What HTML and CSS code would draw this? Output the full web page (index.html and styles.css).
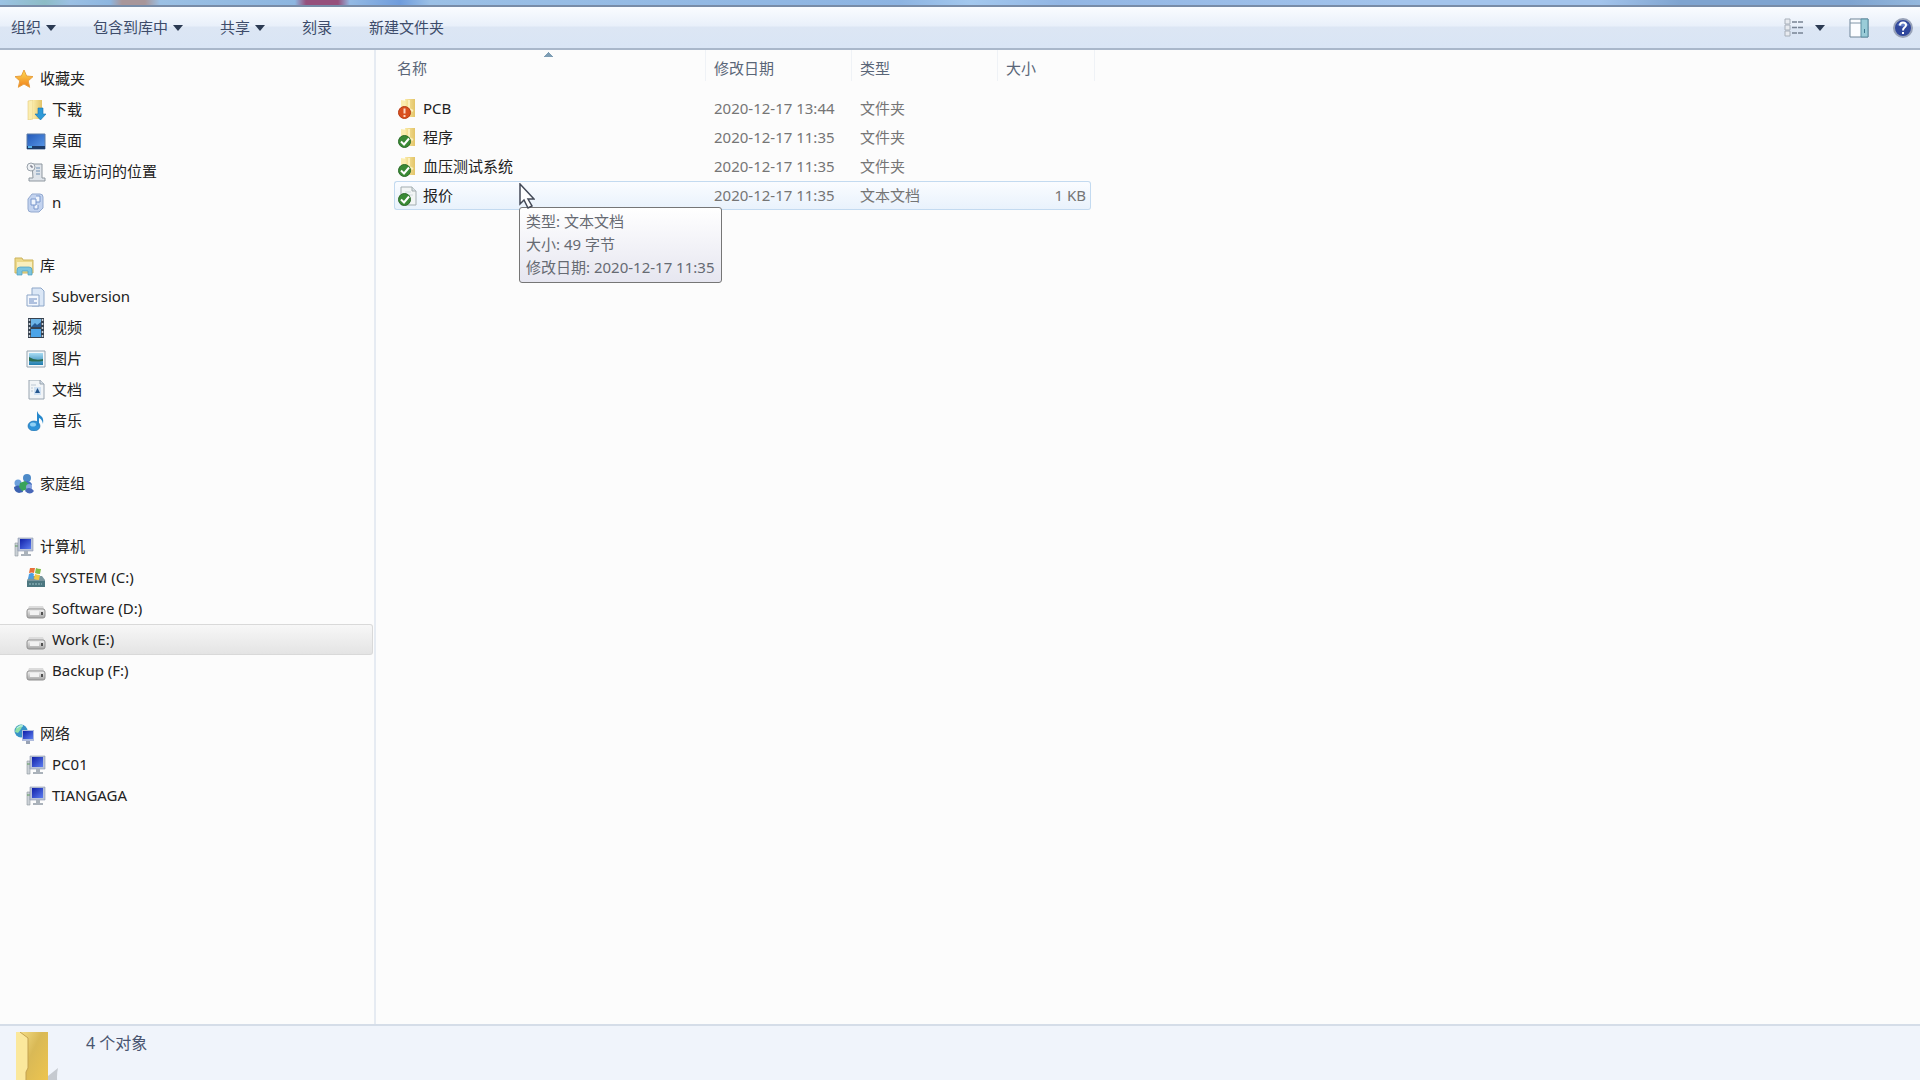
FILE: index.html
```html
<!DOCTYPE html>
<html lang="zh-CN">
<head>
<meta charset="utf-8">
<meta name="viewport" content="width=device-width, initial-scale=1">
<title>Work (E:)</title>
<link rel="stylesheet" href="styles.css">
</head>
<body>
<svg class="defs" aria-hidden="true">
  <defs>
    <linearGradient id="g-folder" x1="0" x2="1"><stop offset="0" stop-color="#faeaa6"/><stop offset="1" stop-color="#e3c468"/></linearGradient>
    <linearGradient id="g-star" y2="1" x2="0"><stop offset="0" stop-color="#ffdf52"/><stop offset="1" stop-color="#f07f1c"/></linearGradient>
    <linearGradient id="g-screen" x2="1" y2="1"><stop offset="0" stop-color="#1020a8"/><stop offset="1" stop-color="#5b7cf0"/></linearGradient>
    <linearGradient id="g-desk" x2="1" y2="1"><stop offset="0" stop-color="#2358b8"/><stop offset="1" stop-color="#5b9bea"/></linearGradient>
    <linearGradient id="g-drive" x2="0" y2="1"><stop offset="0" stop-color="#f4f4f4"/><stop offset="1" stop-color="#a5a5a5"/></linearGradient>
    <linearGradient id="g-sky" x2="0" y2="1"><stop offset="0" stop-color="#a9dcf3"/><stop offset="1" stop-color="#1f7cae"/></linearGradient>
    <linearGradient id="g-big" x1="0" x2="1" y2="1"><stop offset="0" stop-color="#f3dc86"/><stop offset=".4" stop-color="#d9b956"/><stop offset="1" stop-color="#f0c64e"/></linearGradient>
    <symbol id="i-star" viewBox="0 0 20 20"><path d="M10 1l2.600 6 6.400.600-4.800 4.300 1.500 6.400L10 15l-5.700 3.300 1.500-6.400L1 7.600 7.400 7z" fill="url(#g-star)" stroke="#e8a040"/></symbol>
    <symbol id="i-down" viewBox="0 0 20 20"><path d="M2 1l5-1v19l-5 1z" fill="#fbedb0" stroke="#e4cb7a" stroke-width=".6"/><path d="M7 0h9v19H7z" fill="url(#g-folder)"/><path d="M12 8h5v6h3l-5.500 6L9 14h3z" fill="#2d9ad8" stroke="#1a74ae" stroke-width=".6"/></symbol>
    <symbol id="i-desk" viewBox="0 0 20 20"><path d="M1 3h18v15H1z" fill="url(#g-desk)" stroke="#5d7da8"/><path d="M1 15h18v3H1z" fill="#1d3b68"/><path d="M2 15h4v2H2z" fill="#58b4ea"/></symbol>
    <symbol id="i-recent" viewBox="0 0 20 20"><path d="M6 2h10v14h3v3H3v-3h4z" fill="#dfe4ea" stroke="#8e979f"/><path d="M10 6h4M10 9h4M10 12h4" stroke="#6f8fb2"/><circle cx="5" cy="5" r="4" fill="#eef1f4" stroke="#9aa3ab"/><path d="M5 3v2h2" fill="none" stroke="#667"/></symbol>
    <symbol id="i-link" viewBox="0 0 20 20"><path d="M6 1h8q3 0 3 3v11l-4 4H5q-3 0-3-3V6z" fill="#c3d3ef" stroke="#93a9cf"/><path d="M5 6h5v6H5zM10 3h4v6h-4M8 12v4h4v-4" fill="#eef4fd" stroke="#7896cc"/></symbol>
    <symbol id="i-lib" viewBox="0 0 20 20"><path d="M1 2h7l1 2h10v13H1z" fill="#ecd98a" stroke="#cdb45d"/><path d="M3 6h15v6H3z" fill="#f9efbe"/><path d="M3 19v-5q0-3 3-3h9q3 0 3 3v5h-4v-4H8v4z" fill="#7cc5df" stroke="#4a9fc2" stroke-width=".7"/></symbol>
    <symbol id="i-svn" viewBox="0 0 20 20"><path d="M6 1h9l3 3v15H6z" fill="#dbe7f6" stroke="#8da6c8"/><path d="M1 8h12v11H1z" fill="#f3f7fd" stroke="#8da6c8"/><path d="M3 12h8M3 14h5M3 16h8" stroke="#6a8ac0"/></symbol>
    <symbol id="i-video" viewBox="0 0 20 20"><path d="M2 0h16v20H2z" fill="#37424f"/><path d="M5 1h10v8H5z" fill="#6db4e6"/><path d="M5 11h10v8H5z" fill="#4ba4e8"/><path d="M5 9l4-4 2 2 4-3v5z" fill="#275b94"/><path d="M3.500 1v18M16.500 1v18" stroke="#c8d0d8" stroke-width="1.500" stroke-dasharray="2 2"/></symbol>
    <symbol id="i-pic" viewBox="0 0 20 20"><path d="M1 2h18v16H1z" fill="#f5f8fa" stroke="#96a4b0"/><path d="M3 4h14v12H3z" fill="url(#g-sky)"/><path d="M3 8q6 4 14 2v2q-8 1-14 0z" fill="#2c6c50"/></symbol>
    <symbol id="i-doc" viewBox="0 0 20 20"><path d="M3 0h11l4 4v15H3z" fill="#f1f4f7" stroke="#98a4b0"/><path d="M14 0v4h4" fill="#d4dde6" stroke="#98a4b0"/><path d="M8 7h7v8H8z" fill="#cfe0f2"/><path d="M9 13l2.500-5 2.500 5z" fill="#25568e"/><path d="M5 5h5M5 8h2M5 11h2" stroke="#bcc8d4"/></symbol>
    <symbol id="i-music" viewBox="0 0 20 20"><ellipse cx="8" cy="15" rx="6" ry="5" fill="#2f93d8" stroke="#1668a6" stroke-width=".6"/><path d="M11 15V0q1 3 4 5t2 8q-1-5-4-6v7z" fill="#2688cc"/><ellipse cx="7" cy="13.500" rx="3" ry="2" fill="#8fd0f4"/></symbol>
    <symbol id="i-home" viewBox="0 0 20 20"><circle cx="13" cy="4" r="4" fill="#4d8ac8"/><circle cx="4" cy="9" r="3.500" fill="#6ca0dc"/><path d="M0 13q4-3 8 0l1 5-4 1q-5-1-5-6z" fill="#3c62b0"/><path d="M10 8q5-3 8 2l-2 5-5-1z" fill="#446fc0"/><path d="M6 9l5-2 4 3-1 5-6 2-3-4z" fill="#39a35b"/><circle cx="15" cy="13" r="3" fill="#87a4e0"/><path d="M11 17q1-3 4-3t5 3q-4 5-9 0z" fill="#4867b8"/></symbol>
    <symbol id="i-pc" viewBox="0 0 20 20"><path d="M1 6h3v13H1z" fill="#cbd1d6" stroke="#8f979e" stroke-width=".6"/><path d="M1 9h3" stroke="#5c9a5c"/><path d="M4 1h15v13H4z" fill="#b9c3d8" stroke="#8995ab" stroke-width=".6"/><path d="M6 2h11v10H6z" fill="url(#g-screen)"/><path d="M10 14h4v3h3v2H7v-2h3z" fill="#aab2ba"/></symbol>
    <symbol id="i-sys" viewBox="0 0 20 20"><path d="M1 12l3-4h12l3 4v7H1z" fill="#7a969e"/><path d="M1 13h18v6H1z" fill="#4c7780"/><path d="M3 16h13" stroke="#9cc4c8" stroke-dasharray="2 1"/><path d="M4 0q3-2 5 0l-1 5q-2-1-5 0z" fill="#e8703a"/><path d="M10 0q2 1 5 1l-1 5q-3 0-5-1z" fill="#82bd48"/><path d="M3 6q3-2 5 0l-1 5q-2-1-5 0z" fill="#4b9de0"/><path d="M9 6q2 1 5 1l-1 5q-3 0-5-1z" fill="#f3c742"/></symbol>
    <symbol id="i-drive" viewBox="0 0 20 20"><path d="M3 7h14l2 5H1z" fill="#dcdcdc"/><rect x="1" y="10" width="18" height="9" rx="2" fill="url(#g-drive)" stroke="#909090"/><path d="M4 12h9v4H4z" fill="#f2f2f2"/><path d="M15 13h2v3h-2z" fill="#505050"/></symbol>
    <symbol id="i-net" viewBox="0 0 20 20"><circle cx="7" cy="7" r="6.500" fill="#3793c8"/><path d="M2 4q3-4 7-3l-2 4-3 4-3-1z" fill="#8ee0a8"/><path d="M3 4q3-3 6-2" stroke="#c4f0fa" fill="none"/><path d="M8 6h12v11H8z" fill="#aebbdc"/><path d="M9 7h10v8H9z" fill="url(#g-screen)"/><path d="M12 17h4v3h-4z" fill="#98a2b4"/></symbol>
    <symbol id="i-folder" viewBox="0 0 20 20"><path d="M3 1l6 1v16l-6-1z" fill="#fbedb0"/><path d="M7 0h10v18H9z" fill="url(#g-folder)"/><path d="M11 1v9l4 2" stroke="#fbf0bd" fill="none" stroke-width="2"/></symbol>
    <symbol id="i-ok" viewBox="0 0 20 20"><circle cx="6.500" cy="13.500" r="6" fill="#3a8a35" stroke="#2a6b28"/><path d="M3 13.500l3 3 5-6" fill="none" stroke="#fff" stroke-width="2"/></symbol>
    <symbol id="i-bad" viewBox="0 0 20 20"><circle cx="6.500" cy="13.500" r="6" fill="#d9501f" stroke="#b63c14"/><path d="M6.500 9.500v5M6.500 16v2" stroke="#fbd8c4" stroke-width="2"/></symbol>
    <symbol id="i-text" viewBox="0 0 20 20"><path d="M3 1h11l4 4v14H3z" fill="#f2f5f5" stroke="#a3adb0"/><path d="M14 1v4h4" fill="#dde4e6" stroke="#a3adb0"/><path d="M7 6h6M7 9h8" stroke="#d0dade"/></symbol>
    <symbol id="i-view" viewBox="0 0 20 20"><path d="M1 1h5v5H1zM1 7h5v5H1zM1 13h5v5H1z" fill="#e8ebf0" stroke="#a8b0ba"/><path d="M8 4h11M8 9.500h11M8 15h11" stroke="#788494" stroke-width="1.500" stroke-dasharray="5 1"/></symbol>
    <symbol id="i-pane" viewBox="0 0 20 20"><path d="M1 1h18v18H1z" fill="#fbfdff" stroke="#6f8598"/><path d="M1 5h11" stroke="#8096a8"/><path d="M12 1h7v18h-7z" fill="#9accd8" stroke="#5b8ea2"/><path d="M15.500 11v4" stroke="#3c7890"/></symbol>
    <symbol id="i-help" viewBox="0 0 20 20"><circle cx="10" cy="10" r="9" fill="#30479c" stroke="#98a2b8" stroke-width="2"/><path d="M4 7q6-6 12 0-5 3-12 0z" fill="#6680c8"/><path d="M7 7.500q0-3 3-3t3 2.500q0 1.500-1.500 2.500T10 12.500M10 14v2" fill="none" stroke="#fff" stroke-width="2"/></symbol>
  </defs>
</svg>

<div class="window">
  <div class="title-strip"></div>
  <header class="toolbar">
    <button class="tool" type="button">组织<span class="caret"></span></button>
    <button class="tool" type="button">包含到库中<span class="caret"></span></button>
    <button class="tool" type="button">共享<span class="caret"></span></button>
    <button class="tool" type="button">刻录</button>
    <button class="tool" type="button">新建文件夹</button>
    <div class="tools-right">
      <button class="tool view" type="button" aria-label="更改视图"><svg class="icon"><use href="#i-view"/></svg><span class="caret"></span></button>
      <button class="tool" type="button" aria-label="预览窗格"><svg class="icon"><use href="#i-pane"/></svg></button>
      <button class="tool" type="button" aria-label="帮助"><svg class="icon"><use href="#i-help"/></svg></button>
    </div>
  </header>

  <div class="body">
    <nav class="sidebar">
      <ul class="group">
        <li><a class="item root" href="#"><svg class="icon"><use href="#i-star"/></svg>收藏夹</a></li>
        <li><a class="item" href="#"><svg class="icon"><use href="#i-down"/></svg>下载</a></li>
        <li><a class="item" href="#"><svg class="icon"><use href="#i-desk"/></svg>桌面</a></li>
        <li><a class="item" href="#"><svg class="icon"><use href="#i-recent"/></svg>最近访问的位置</a></li>
        <li><a class="item" href="#"><svg class="icon"><use href="#i-link"/></svg>n</a></li>
      </ul>
      <ul class="group">
        <li><a class="item root" href="#"><svg class="icon"><use href="#i-lib"/></svg>库</a></li>
        <li><a class="item" href="#"><svg class="icon"><use href="#i-svn"/></svg>Subversion</a></li>
        <li><a class="item" href="#"><svg class="icon"><use href="#i-video"/></svg>视频</a></li>
        <li><a class="item" href="#"><svg class="icon"><use href="#i-pic"/></svg>图片</a></li>
        <li><a class="item" href="#"><svg class="icon"><use href="#i-doc"/></svg>文档</a></li>
        <li><a class="item" href="#"><svg class="icon"><use href="#i-music"/></svg>音乐</a></li>
      </ul>
      <ul class="group">
        <li><a class="item root" href="#"><svg class="icon"><use href="#i-home"/></svg>家庭组</a></li>
      </ul>
      <ul class="group">
        <li><a class="item root" href="#"><svg class="icon"><use href="#i-pc"/></svg>计算机</a></li>
        <li><a class="item" href="#"><svg class="icon"><use href="#i-sys"/></svg>SYSTEM (C:)</a></li>
        <li><a class="item" href="#"><svg class="icon"><use href="#i-drive"/></svg>Software (D:)</a></li>
        <li><a class="item selected" href="#" aria-current="page"><svg class="icon"><use href="#i-drive"/></svg>Work (E:)</a></li>
        <li><a class="item" href="#"><svg class="icon"><use href="#i-drive"/></svg>Backup (F:)</a></li>
      </ul>
      <ul class="group">
        <li><a class="item root" href="#"><svg class="icon"><use href="#i-net"/></svg>网络</a></li>
        <li><a class="item" href="#"><svg class="icon"><use href="#i-pc"/></svg>PC01</a></li>
        <li><a class="item" href="#"><svg class="icon"><use href="#i-pc"/></svg>TIANGAGA</a></li>
      </ul>
    </nav>

    <main class="content">
      <table class="files">
        <colgroup><col class="c-name"><col class="c-date"><col class="c-type"><col class="c-size"><col class="c-end"></colgroup>
        <thead>
          <tr><th class="sorted" aria-sort="ascending">名称</th><th>修改日期</th><th>类型</th><th>大小</th><th class="end"></th></tr>
        </thead>
        <tbody>
          <tr><td><div class="name"><svg class="icon"><use href="#i-folder"/><use href="#i-bad"/></svg>PCB</div></td><td>2020-12-17 13:44</td><td>文件夹</td><td></td></tr>
          <tr><td><div class="name"><svg class="icon"><use href="#i-folder"/><use href="#i-ok"/></svg>程序</div></td><td>2020-12-17 11:35</td><td>文件夹</td><td></td></tr>
          <tr><td><div class="name"><svg class="icon"><use href="#i-folder"/><use href="#i-ok"/></svg>血压测试系统</div></td><td>2020-12-17 11:35</td><td>文件夹</td><td></td></tr>
          <tr class="hot"><td><div class="name"><svg class="icon"><use href="#i-text"/><use href="#i-ok"/></svg>报价
            <div class="tooltip" role="tooltip"><span>类型: 文本文档</span><span>大小: 49 字节</span><span>修改日期: 2020-12-17 11:35</span></div>
            <svg class="cursor" viewBox="0 0 16 26"><path d="M1 1v20l4-4 4 8 4-2-4-7h6z" fill="#fff" stroke="#444a58" stroke-width="1.500"/></svg></div></td><td>2020-12-17 11:35</td><td>文本文档</td><td class="size">1 KB</td></tr>
        </tbody>
      </table>
    </main>
  </div>

  <footer class="status">
    <svg class="big-folder" viewBox="0 0 48 56"><path d="M32 56V44l10-8q-2 8 0 20z" fill="#c6cad0"/><path d="M4 0h28v56H8z" fill="url(#g-big)"/><path d="M0 0h4l8 6v30l-2 4v16H0z" fill="#fbe89c"/><path d="M4 0l8 6v30l-2 4v16" fill="none" stroke="#c3a250"/></svg>
    <span>4 个对象</span>
  </footer>
</div>
</body>
</html>
```
FILE: styles.css
```css
* { box-sizing: border-box; }

body {
  margin: 0;
  font: 15px/23px "Noto Sans", "Noto Sans CJK SC", sans-serif;
  color: #222;
  background: #fcfcfc;
}

.defs { position: absolute; width: 0; height: 0; }

.window { display: flex; flex-direction: column; height: 100vh; overflow: hidden; }

.icon { flex: none; width: 20px; height: 20px; }

/* Title bar edge */
.title-strip {
  flex: none;
  height: 7px;
  border-bottom: 2px solid #788ca8;
  background: linear-gradient(90deg, #9cc3e4 0, #8dbcc6 45px, #9bc0e4 70px, #8db6e0 110px, #a8969a 122px, #a8969a 145px, #9bc0e4 160px, #8db6e0 295px, #96507c 306px, #96507c 338px, #94bae4 350px, #6f9cdc 400px, #9bc0e6 430px, #8db4e2 900px, #a3c8ee 970px, #92b6e4 1060px, #a3c4ec 1400px, #a3c4ec 1600px, #7fa4d0 1680px, #7fa4d0 1850px, #94b8de 100%);
}

/* Command bar */
.toolbar {
  flex: none;
  display: flex;
  align-items: center;
  gap: 37px;
  height: 43px;
  padding: 0 7px 0 11px;
  border-bottom: 2px solid #a9b7ca;
  background: linear-gradient(#fafcff 0%, #e9f0fa 45%, #dce6f4 50%, #d9e5f5 100%);
}

.tool {
  display: flex;
  align-items: center;
  gap: 5px;
  padding: 0;
  border: 0;
  background: none;
  font: inherit;
  color: #3d4c6a;
}

.caret { border: 5px solid transparent; border-top: 6px solid #2b3a52; border-bottom: 0; }

.tools-right { display: flex; gap: 24px; margin-left: auto; }
.view { gap: 11px; }

/* Main area */
.body { flex: 1; display: flex; min-height: 0; }

.sidebar {
  flex: none;
  width: 376px;
  padding: 13px 1px 0 0;
  border-right: 2px solid #e6ebf2;
  background: #fcfcfc;
}

.group { margin: 0 0 32px; padding: 0; list-style: none; }

.item {
  display: flex;
  align-items: center;
  gap: 6px;
  height: 31px;
  padding-left: 26px;
  color: #222;
  text-decoration: none;
}

.item.root { padding-left: 14px; }

.item.selected {
  border: 1px solid #d9d9d9;
  border-left: 0;
  border-radius: 0 3px 3px 0;
  background: linear-gradient(#f7f7f7, #e4e4e4);
}

.content { flex: 1; padding-left: 18px; }

.files { width: 701px; table-layout: fixed; border-collapse: separate; border-spacing: 0; }
.c-name { width: 312px; }
.c-date { width: 146px; }
.c-type { width: 146px; }
.c-size { width: 93px; }
.c-end { width: 4px; }

.files th {
  height: 44px;
  padding: 7px 0 14px 8px;
  font-weight: 400;
  text-align: left;
  color: #5a6678;
  background: linear-gradient(#eff2f6, #eff2f6) right top / 1px 31px no-repeat;
}

.files th:first-child { padding-left: 3px; }
.files th:nth-child(4) { background: none; }
.files th.end { padding: 0; }

.files th.sorted {
  background:
    conic-gradient(from 135deg at 50% 0, #7d9db4 90deg, transparent 0) 149px 2px / 10px 5px no-repeat,
    linear-gradient(#eff2f6, #eff2f6) right top / 1px 31px no-repeat;
}

.files td { height: 29px; padding: 0 0 0 8px; border: solid transparent; border-width: 1px 0; color: #757575; }
.files td:first-child { padding-left: 3px; border-left-width: 1px; color: #222; }
.files td:nth-child(4) { padding-right: 4px; border-right-width: 1px; }
.files td.size { text-align: right; }

.hot td { border-color: #c3daf0; background: linear-gradient(#fafcff, #e9f2fc); background-clip: padding-box; }
.hot td:first-child { border-radius: 3px 0 0 3px; }
.hot td:nth-child(4) { border-radius: 0 3px 3px 0; }

.name { position: relative; display: flex; align-items: center; gap: 5px; }

.tooltip {
  position: absolute;
  left: 121px;
  top: 23px;
  z-index: 1;
  display: flex;
  flex-direction: column;
  padding: 2px 7px 3px 6px;
  border: 1px solid #767676;
  border-radius: 3px;
  background: linear-gradient(#fff, #e6e6f0);
  color: #666a72;
  white-space: nowrap;
}

.cursor { position: absolute; left: 121px; top: -1px; z-index: 2; width: 16px; height: 26px; }

/* Details pane */
.status {
  flex: none;
  display: flex;
  align-items: flex-start;
  gap: 22px;
  height: 56px;
  padding: 6px 16px 0;
  border-top: 2px solid #d5dde8;
  background: #f0f4fb;
  font-size: 16px;
  color: #4a5570;
}

.big-folder { flex: none; width: 48px; height: 56px; }
```
